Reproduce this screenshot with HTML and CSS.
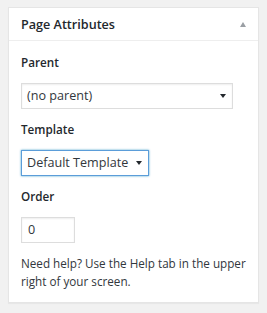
FILE: index.html
```html
<!DOCTYPE html>
<html>
<head>
  <meta http-equiv="Content-type" content="text/html; charset=utf-8">
  <link rel="stylesheet" href="styles.css">
</head>
<body>
  <div class="postbox">
    <div class="hndle">
      <span>Page Attributes</span>
      <span class="toggle-arrow"></span>
    </div>
    <div class="inside">
      <p class="label">Parent</p>
      <div class="select select-parent">
        <span>(no parent)</span>
        <span class="caret"></span>
      </div>
      <p class="label">Template</p>
      <div class="select select-template">
        <span>Default Template</span>
        <span class="caret"></span>
      </div>
      <p class="label label-order">Order</p>
      <div class="order-input">0</div>
      <p class="help">Need help? Use the Help tab in the upper right of your screen.</p>
    </div>
  </div>
</body>
</html>
```

FILE: styles.css
```css
body {
  margin: 0;
  padding: 7px 8px;
  background: #f1f1f1;
  font-family: "Open Sans", "Liberation Sans", sans-serif;
  font-size: 11.7px;
  color: #32373c;
}

.postbox {
  width: 249px;
  background: #fff;
  border: 1px solid #e5e5e5;
  box-shadow: 0 1px 1px rgba(0,0,0,.04);
}

.hndle {
  display: flex;
  justify-content: space-between;
  align-items: center;
  height: 32px;
  padding: 0 12px 0 12px;
  border-bottom: 1px solid #eee;
  font-size: 12.6px;
  font-weight: 600;
  color: #23282d;
}

.toggle-arrow {
  width: 0;
  height: 0;
  border-left: 3.5px solid transparent;
  border-right: 3.5px solid transparent;
  border-bottom: 5px solid #9a9fa4;
  margin-top: 1px;
}

.inside {
  padding: 12px 12px 12px 12px;
}

.label {
  margin: 0 0 12px;
  line-height: 18px;
  font-weight: 600;
  color: #23282d;
}

.label-order {
  margin-top: 1px;
}

.select {
  display: flex;
  justify-content: space-between;
  align-items: center;
  box-sizing: border-box;
  height: 26px;
  padding: 0 6px 0 5px;
  margin-bottom: 11px;
  border: 1px solid #ddd;
  box-shadow: inset 0 1px 2px rgba(0,0,0,.07);
  font-size: 12.6px;
  line-height: 24px;
  color: #32373c;
}

.select-parent {
  width: 212px;
}

.select-template {
  width: 128px;
  border-color: #5b9dd9;
  box-shadow: 0 0 2px rgba(30,140,190,.8);
}

.caret {
  width: 0;
  height: 0;
  border-left: 3px solid transparent;
  border-right: 3px solid transparent;
  border-top: 4px solid #23282d;
}

.order-input {
  box-sizing: border-box;
  width: 54px;
  height: 26px;
  padding: 0 6px;
  border: 1px solid #ddd;
  box-shadow: inset 0 1px 2px rgba(0,0,0,.07);
  font-size: 12.6px;
  line-height: 24px;
}

.help {
  margin: 11px 0 0;
  line-height: 18px;
}
```
